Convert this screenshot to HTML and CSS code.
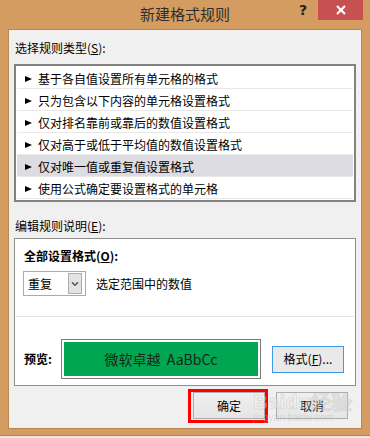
FILE: index.html
```html
<!DOCTYPE html>
<html>
<head>
<meta charset="utf-8">
<link rel="stylesheet" href="styles.css">
</head>
<body>
<div class="dialog">
  <div class="titlebar">
    <div class="tb-left"></div>
    <div class="title">新建格式规则</div>
    <div class="tb-right">
      <div class="help">?</div>
      <div class="close">
        <svg width="12" height="12" viewBox="0 0 12 12"><path d="M2 2 L10 10 M10 2 L2 10" stroke="#fff" stroke-width="2.2" fill="none"/></svg>
      </div>
    </div>
  </div>
  <div class="client">
    <div class="label">选择规则类型(<u>S</u>):</div>
    <div class="list">
      <div class="row"><span class="tri"></span>基于各自值设置所有单元格的格式</div>
      <div class="row"><span class="tri"></span>只为包含以下内容的单元格设置格式</div>
      <div class="row"><span class="tri"></span>仅对排名靠前或靠后的数值设置格式</div>
      <div class="row"><span class="tri"></span>仅对高于或低于平均值的数值设置格式</div>
      <div class="row selected"><span class="tri"></span>仅对唯一值或重复值设置格式</div>
      <div class="row"><span class="tri"></span>使用公式确定要设置格式的单元格</div>
    </div>
    <div class="label label2">编辑规则说明(<u>E</u>):</div>
    <div class="desc">
      <div class="bold-label">全部设置格式(<u>O</u>):</div>
      <div class="selrow">
        <div class="combo">
          <span class="combo-text">重复</span>
          <span class="combo-btn">
            <svg width="8" height="6" viewBox="0 0 8 6"><path d="M1 1.2 L4 4.2 L7 1.2" stroke="#555" stroke-width="1.5" fill="none"/></svg>
          </span>
        </div>
        <span class="sel-text">选定范围中的数值</span>
      </div>
      <div class="sep"></div>
      <div class="preview-row">
        <span class="preview-label">预览:</span>
        <div class="preview"><div class="fill">微软卓越&nbsp; AaBbCc</div></div>
        <div class="btn fmt">格式(<u>F</u>)...</div>
      </div>
    </div>
    <div class="buttons">
      <div class="btn ok">确定<span class="mark"></span></div>
      <div class="btn cancel">取消</div>
      <div class="watermark"><span class="wm-big">Baidu经验</span><span class="wm-small">jingyan.baidu.com</span></div>
    </div>
  </div>
</div>
</body>
</html>
```

FILE: styles.css
```css
* { box-sizing: border-box; }
html, body { margin: 0; padding: 0; }
body {
  width: 370px;
  height: 438px;
  overflow: hidden;
  background: #e9e9e9;
  font-family: "Noto Sans CJK SC", "Microsoft YaHei", sans-serif;
  font-size: 12px;
  color: #000;
}
u { text-decoration: underline; text-underline-offset: 1px; }

.dialog {
  width: 370px;
  height: 436px;
  background: #d49c60;
  border-bottom: 1px solid #b3814c;
}

.titlebar {
  height: 29px;
  display: grid;
  grid-template-columns: 1fr auto 1fr;
}
.title {
  font-size: 15px;
  line-height: 28px;
  color: #2e2e2e;
  white-space: nowrap;
}
.tb-right {
  display: flex;
  justify-content: flex-end;
  align-items: flex-start;
  padding-right: 7px;
}
.help {
  font-family: "DejaVu Sans", sans-serif;
  font-weight: bold;
  font-size: 14px;
  line-height: 20px;
  color: #222;
  margin-right: 11px;
}
.close {
  width: 45px;
  height: 20px;
  background: #c75050;
  display: flex;
  align-items: center;
  justify-content: center;
}
.close svg { display: block; }

.client {
  margin: 0 8px;
  height: 400px;
  background: #f0f0f0;
  border: 1px solid #b98753;
  padding: 10px 5px 0 5px;
}

.label {
  line-height: 16px;
  height: 16px;
  padding-left: 1px;
  white-space: nowrap;
}

.list {
  margin-top: 8px;
  height: 138px;
  background: #fff;
  border: 2px solid #828282;
  padding: 1px 1px;
}
.row {
  height: 22px;
  padding-top: 2px;
  line-height: 19px;
  border-bottom: 1px solid #e8e8e8;
  display: flex;
  align-items: center;
  padding-left: 8px;
  white-space: nowrap;
}
.row.selected { background: #dcdce2; }
.tri {
  width: 0;
  height: 0;
  border-left: 7px solid #000;
  border-top: 3.5px solid transparent;
  border-bottom: 3.5px solid transparent;
  margin-right: 6px;
}

.label2 { margin-top: 16px; }

.desc {
  margin-top: 4px;
  height: 148px;
  background: #fff;
  border: 1px solid #8e8e8e;
  padding: 9px 0 6px 0;
}
.bold-label {
  font-weight: bold;
  line-height: 16px;
  height: 16px;
  padding-left: 9px;
}
.selrow {
  margin-top: 7px;
  padding-left: 8px;
  display: flex;
  align-items: center;
}
.combo {
  width: 63px;
  height: 25px;
  border: 1px solid #ababab;
  background: #fff;
  display: flex;
  align-items: center;
  justify-content: space-between;
  padding: 0 3px 0 4px;
}
.combo-text { line-height: 16px; }
.combo-btn {
  width: 14px;
  height: 21px;
  background: #e3e3e3;
  border: 1px solid #acacac;
  display: flex;
  align-items: center;
  justify-content: center;
}
.combo-btn svg { display: block; }
.sel-text { margin-left: 10px; line-height: 16px; }

.sep {
  margin: 20px 1px 0;
  height: 1px;
  background: #e3e3e3;
}

.preview-row {
  margin-top: 22px;
  padding-left: 9px;
  display: flex;
  align-items: center;
}
.preview-label {
  width: 37px;
  font-weight: bold;
  line-height: 16px;
}
.preview {
  width: 200px;
  height: 40px;
  border: 1px solid #7c7c7c;
  padding: 2px;
  background: #fff;
}
.fill {
  height: 100%;
  background: #00a651;
  color: #16261a;
  font-size: 14px;
  display: flex;
  align-items: center;
  justify-content: center;
  white-space: nowrap;
}

.btn {
  width: 72px;
  height: 27px;
  border: 1px solid #adadad;
  background: linear-gradient(#f0f0f0, #e5e5e5);
  display: flex;
  align-items: center;
  justify-content: center;
  line-height: 16px;
  white-space: nowrap;
}
.btn.fmt {
  margin-left: 11px;
  border-color: #3c9ae6;
  background: #e9e9e9;
}

.buttons {
  margin-top: 6px;
  display: flex;
  justify-content: flex-end;
  padding-right: 8px;
  gap: 11px;
  position: relative;
}
.ok { position: relative; }
.mark {
  position: absolute;
  left: -6px;
  top: -4px;
  right: -4px;
  bottom: -5px;
  border: 3px solid #ff0000;
}
.watermark {
  position: absolute;
  left: 239px;
  top: 0;
  display: flex;
  flex-direction: column;
  pointer-events: none;
}
.wm-big {
  font-family: "Liberation Sans", sans-serif;
  font-weight: bold;
  font-size: 20px;
  line-height: 21px;
  color: rgba(255,255,255,0.3);
  -webkit-text-stroke: 1px rgba(180,180,180,0.35);
  letter-spacing: 0.5px;
  white-space: nowrap;
}
.wm-small {
  font-family: "Liberation Sans", sans-serif;
  font-size: 10px;
  line-height: 10px;
  color: rgba(185,185,185,0.4);
  white-space: nowrap;
}
```
